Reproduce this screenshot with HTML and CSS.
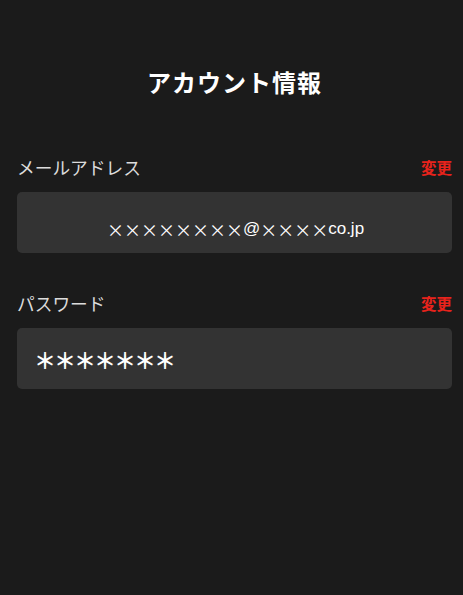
FILE: index.html
```html
<!DOCTYPE html>
<html lang="ja">
<head>
<meta charset="utf-8">
<link rel="stylesheet" href="styles.css">
</head>
<body>
<main class="page">
  <h1 class="title">アカウント情報</h1>
  <section class="field field-first">
    <div class="field-head">
      <span class="label">メールアドレス</span>
      <a class="change">変更</a>
    </div>
    <div class="box box-email"><span class="jp">××××××××</span>@<span class="jp">××××</span>co.jp</div>
  </section>
  <section class="field">
    <div class="field-head">
      <span class="label">パスワード</span>
      <a class="change">変更</a>
    </div>
    <div class="box box-pass"><span class="stars">＊＊＊＊＊＊＊</span></div>
  </section>
</main>
</body>
</html>
```

FILE: styles.css
```css
html, body {
  margin: 0;
  padding: 0;
  background: #1b1b1b;
}
body {
  font-family: "Noto Sans CJK JP", "Liberation Sans", sans-serif;
  color: #e0e0e0;
  width: 463px;
  height: 595px;
}
.page {
  padding: 0 11px 0 17px;
}
.title {
  margin: 65px 0 0 0;
  font-size: 24px;
  line-height: 34px;
  font-weight: 700;
  letter-spacing: 1px;
  color: #ffffff;
  text-align: center;
}
.field {
  margin-top: 38px;
}
.field-first {
  margin-top: 56px;
}
.field-head {
  display: flex;
  justify-content: space-between;
  align-items: center;
  height: 24px;
  margin-bottom: 13px;
}
.label {
  font-size: 17.7px;
  color: #dcdcdc;
}
.change {
  font-size: 15.5px;
  font-weight: 700;
  color: #e8231c;
}
.box {
  height: 61px;
  background: #333333;
  border-radius: 5px;
  display: flex;
  align-items: center;
  box-sizing: border-box;
}
.box-email {
  justify-content: center;
  padding-top: 13px;
  padding-left: 2px;
  font-family: "Liberation Sans", sans-serif;
  font-size: 17px;
  color: #ffffff;
}
.jp {
  font-family: "Noto Sans CJK JP", sans-serif;
}
.box-pass {
  padding-left: 17px;
}
.stars {
  font-family: "Noto Sans CJK JP", sans-serif;
  font-size: 22px;
  letter-spacing: -2px;
  font-weight: 700;
  color: #ffffff;
}
```
